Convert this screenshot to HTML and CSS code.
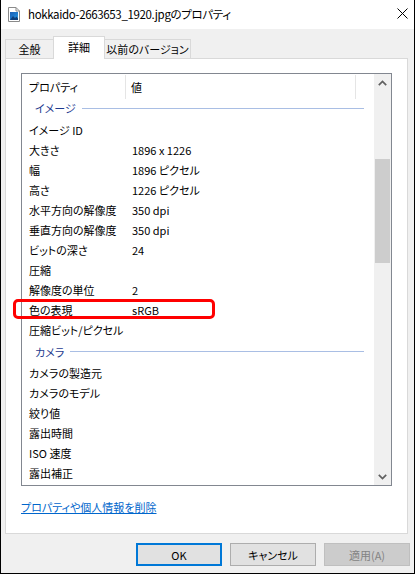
FILE: index.html
```html
<!DOCTYPE html>
<html lang="ja">
<head>
<meta charset="utf-8">
<title>プロパティ</title>
<link rel="stylesheet" href="styles.css">
</head>
<body>
<div class="window">
  <div class="titlebar">
    <svg class="file-icon" width="12" height="15" viewBox="0 0 12 15">
      <path d="M0.5 0.5 H8 L11.5 4 V14.5 H0.5 Z" fill="#ffffff" stroke="#8a8a8a"/>
      <path d="M8 0.5 V4 H11.5" fill="none" stroke="#8a8a8a"/>
      <defs>
        <linearGradient id="pic" x1="0" y1="0" x2="1" y2="1">
          <stop offset="0" stop-color="#1a5fb4"/>
          <stop offset="0.6" stop-color="#1f7fd0"/>
          <stop offset="1" stop-color="#3ab0e6"/>
        </linearGradient>
      </defs>
      <rect x="2" y="5" width="8" height="8" fill="url(#pic)"/>
      <path d="M2 13 L5 9 L7 11 L8.5 9.5 L10 11.5 V13 Z" fill="#0e3f7a"/>
    </svg>
    <span class="title">hokkaido-2663653_1920.jpgのプロパティ</span>
    <svg class="close" width="11" height="11" viewBox="0 0 11 11">
      <path d="M0.5 0.5 L10.5 10.5 M10.5 0.5 L0.5 10.5" stroke="#000" stroke-width="1" fill="none"/>
    </svg>
  </div>

  <div class="tabs">
    <div class="tab tab-general">全般</div>
    <div class="tab tab-active">詳細</div>
    <div class="tab tab-prev">以前のバージョン</div>
  </div>

  <div class="panel">
    <div class="list">
      <div class="list-body">
        <div class="list-header">
          <div class="hcell hcell-name">プロパティ</div>
          <div class="hcell hcell-value">値</div>
        </div>
        <div class="group group-first"><span class="group-label">イメージ</span><span class="group-line"></span></div>
        <div class="row"><span class="name">イメージ ID</span><span class="value"></span></div>
        <div class="row"><span class="name">大きさ</span><span class="value">1896 x 1226</span></div>
        <div class="row"><span class="name">幅</span><span class="value">1896 ピクセル</span></div>
        <div class="row"><span class="name">高さ</span><span class="value">1226 ピクセル</span></div>
        <div class="row"><span class="name">水平方向の解像度</span><span class="value">350 dpi</span></div>
        <div class="row"><span class="name">垂直方向の解像度</span><span class="value">350 dpi</span></div>
        <div class="row"><span class="name">ビットの深さ</span><span class="value">24</span></div>
        <div class="row"><span class="name">圧縮</span><span class="value"></span></div>
        <div class="row"><span class="name">解像度の単位</span><span class="value">2</span></div>
        <div class="row"><span class="name">色の表現</span><span class="value">sRGB</span></div>
        <div class="row"><span class="name">圧縮ビット/ピクセル</span><span class="value"></span></div>
        <div class="group group-second"><span class="group-label">カメラ</span><span class="group-line"></span></div>
        <div class="row"><span class="name">カメラの製造元</span><span class="value"></span></div>
        <div class="row"><span class="name">カメラのモデル</span><span class="value"></span></div>
        <div class="row"><span class="name">絞り値</span><span class="value"></span></div>
        <div class="row"><span class="name">露出時間</span><span class="value"></span></div>
        <div class="row"><span class="name">ISO 速度</span><span class="value"></span></div>
        <div class="row"><span class="name">露出補正</span><span class="value"></span></div>
      </div>
      <div class="scrollbar">
        <div class="sb-btn">
          <svg width="9" height="6" viewBox="0 0 9 6"><path d="M0.8 5.2 L4.5 1.5 L8.2 5.2" fill="none" stroke="#606060" stroke-width="1.7"/></svg>
        </div>
        <div class="sb-track"><div class="sb-thumb"></div></div>
        <div class="sb-btn">
          <svg width="9" height="6" viewBox="0 0 9 6"><path d="M0.8 0.8 L4.5 4.5 L8.2 0.8" fill="none" stroke="#606060" stroke-width="1.7"/></svg>
        </div>
      </div>
    </div>
    <a class="link" href="#">プロパティや個人情報を削除</a>
  </div>

  <div class="buttons">
    <div class="btn btn-default">OK</div>
    <div class="btn">キャンセル</div>
    <div class="btn btn-disabled">適用(A)</div>
  </div>

  <div class="highlight"></div>
</div>
</body>
</html>
```

FILE: styles.css
```css
* {
  box-sizing: border-box;
}

html, body {
  margin: 0;
  padding: 0;
  background: #f0f0f0;
}

body {
  font-family: "Noto Sans CJK JP", sans-serif;
  font-size: 11px;
  font-feature-settings: "palt";
  color: #000;
}

.window {
  position: relative;
  width: 415px;
  height: 574px;
  background: #f0f0f0;
  border-left: 1px solid #000;
  border-right: 1px solid #000;
  border-bottom: 1px solid #000;
  overflow: hidden;
}

/* Title bar */
.titlebar {
  height: 29px;
  background: #fff;
  display: flex;
  align-items: center;
}

.file-icon {
  margin-left: 7px;
  margin-top: -1px;
  flex: none;
}

.title {
  margin-left: 8px;
  font-size: 11.5px;
  letter-spacing: -0.35px;
  line-height: 16px;
  margin-top: -2px;
  flex: 1;
  white-space: nowrap;
}

.close {
  margin-right: 6px;
  margin-top: -2px;
  flex: none;
}

/* Tabs */
.tabs {
  display: flex;
  align-items: flex-end;
  padding: 7px 0 0 4px;
  height: 30px;
  margin-bottom: -1px;
}

.tab {
  height: 19px;
  margin-bottom: 1px;
  background: #f0f0f0;
  border-top: 1px solid #d9d9d9;
  line-height: 18px;
  text-align: center;
  font-size: 11px;
  white-space: nowrap;
}

.tab-general {
  width: 48px;
  border-left: 1px solid #d9d9d9;
}

.tab-active {
  position: relative;
  z-index: 1;
  width: 52px;
  height: 23px;
  margin-bottom: 0;
  background: #fff;
  border-left: 1px solid #d9d9d9;
  border-right: 1px solid #d9d9d9;
  line-height: 20px;
}

.tab-prev {
  width: 86px;
  border-right: 1px solid #d9d9d9;
}

/* Panel */
.panel {
  margin-left: 4px;
  width: 403px;
  height: 476px;
  background: #fff;
  border: 1px solid #d9d9d9;
  padding: 14px 0 0 15px;
}

.list {
  width: 371px;
  height: 413px;
  border: 1px solid #828790;
  display: flex;
  overflow: hidden;
}

.list-body {
  flex: 1;
  overflow: hidden;
}

.list-header {
  display: flex;
  height: 25px;
  padding-top: 1px;
}

.hcell {
  height: 24px;
  line-height: 24px;
  border-right: 1px solid #e5e5e5;
  padding-left: 7px;
}

.hcell-name {
  width: 104px;
}

.hcell-value {
  width: 230px;
  padding-left: 5px;
}

.group {
  display: flex;
  align-items: center;
  padding-left: 13px;
  padding-right: 10px;
  color: #1e3b8f;
}

.group-first {
  height: 21px;
  padding-bottom: 3px;
}

.group-second {
  height: 23px;
}

.group-label {
  white-space: nowrap;
  line-height: 14px;
}

.group-line {
  margin-left: 6px;
  flex: 1;
  height: 1px;
  background: #a9bee4;
}

.row {
  display: flex;
  height: 20px;
  line-height: 20px;
  white-space: nowrap;
}

.name {
  width: 103px;
  padding-left: 7px;
}

.value {
  padding-left: 7px;
}

/* Scrollbar */
.scrollbar {
  width: 17px;
  flex: none;
  background: #f0f0f0;
  display: flex;
  flex-direction: column;
}

.sb-btn {
  height: 17px;
  display: flex;
  align-items: center;
  justify-content: center;
  flex: none;
}

.sb-track {
  flex: 1;
}

.sb-thumb {
  margin: 68px 1px 0 1px;
  height: 104px;
  background: #cdcdcd;
}

/* Link */
.link {
  display: inline-block;
  margin-top: 13px;
  color: #0066cc;
  text-decoration: underline;
  font-size: 11px;
  line-height: 16px;
}

/* Buttons */
.buttons {
  display: flex;
  justify-content: flex-end;
  gap: 8px;
  padding: 9px 4px 0 0;
}

.btn {
  width: 86px;
  height: 23px;
  background: #e1e1e1;
  border: 1px solid #adadad;
  display: flex;
  align-items: center;
  justify-content: center;
  font-size: 11px;
}

.btn-default {
  border: 2px solid #0078d7;
}

.btn-disabled {
  background: #cccccc;
  border-color: #bfbfbf;
  color: #838383;
}

/* Red highlight annotation */
.highlight {
  position: absolute;
  left: 12px;
  top: 299px;
  width: 202px;
  height: 20px;
  border: 3px solid #ff0000;
  border-radius: 5px;
}
```
